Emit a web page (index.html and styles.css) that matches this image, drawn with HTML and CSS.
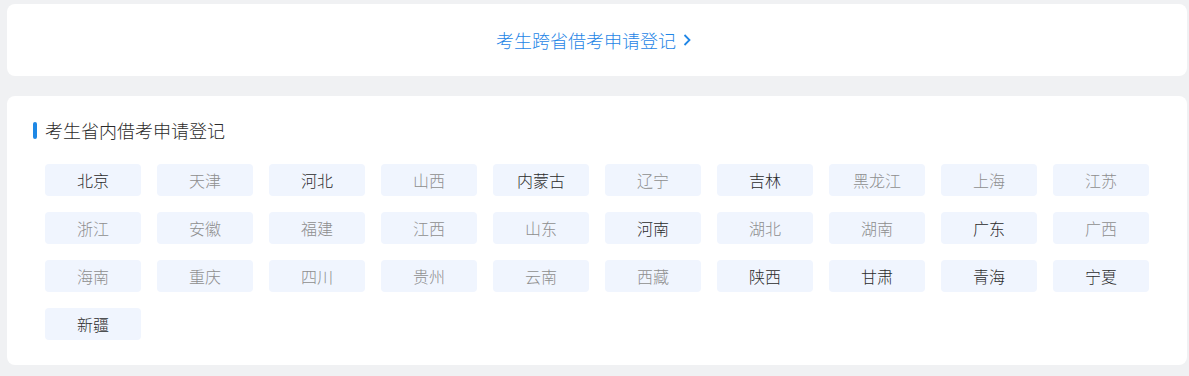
FILE: index.html
```html
<!DOCTYPE html>
<html lang="zh">
<head>
<meta charset="utf-8">
<link rel="stylesheet" href="styles.css">
</head>
<body>
<div class="page">
  <div class="card link-card">
    <a class="cross-link" href="#">考生跨省借考申请登记<svg class="chev" width="9" height="12" viewBox="0 0 9 12"><polyline points="1.5,1 6.5,6 1.5,11" fill="none" stroke="currentColor" stroke-width="1.8"/></svg></a>
  </div>
  <div class="card list-card">
    <div class="title"><span class="bar"></span>考生省内借考申请登记</div>
    <div class="grid">
      <span class="prov on">北京</span>
      <span class="prov">天津</span>
      <span class="prov on">河北</span>
      <span class="prov">山西</span>
      <span class="prov on">内蒙古</span>
      <span class="prov">辽宁</span>
      <span class="prov on">吉林</span>
      <span class="prov">黑龙江</span>
      <span class="prov">上海</span>
      <span class="prov">江苏</span>
      <span class="prov">浙江</span>
      <span class="prov">安徽</span>
      <span class="prov">福建</span>
      <span class="prov">江西</span>
      <span class="prov">山东</span>
      <span class="prov on">河南</span>
      <span class="prov">湖北</span>
      <span class="prov">湖南</span>
      <span class="prov on">广东</span>
      <span class="prov">广西</span>
      <span class="prov">海南</span>
      <span class="prov">重庆</span>
      <span class="prov">四川</span>
      <span class="prov">贵州</span>
      <span class="prov">云南</span>
      <span class="prov">西藏</span>
      <span class="prov on">陕西</span>
      <span class="prov on">甘肃</span>
      <span class="prov on">青海</span>
      <span class="prov on">宁夏</span>
      <span class="prov on">新疆</span>
    </div>
  </div>
</div>
</body>
</html>
```
FILE: styles.css
```css
html, body {
  margin: 0;
  padding: 0;
  background: #f0f1f3;
}
body {
  font-family: "Noto Sans CJK SC", "Noto Sans", sans-serif;
  font-weight: 300;
}
.page {
  padding: 4px 2px 10px 7px;
  display: flex;
  flex-direction: column;
  gap: 20px;
}
.card {
  background: #fff;
  border-radius: 8px;
}
.link-card {
  height: 72px;
  display: flex;
  align-items: center;
  justify-content: center;
}
.cross-link {
  color: #1f86e6;
  text-decoration: none;
  font-size: 18px;
  display: flex;
  align-items: center;
  gap: 7px;
  margin-right: 6px;
}
.chev {
  display: block;
}
.list-card {
  padding: 22px 0 25px 26px;
}
.title {
  display: flex;
  align-items: center;
  font-size: 18px;
  color: #2b2b2b;
  height: 24px;
}
.bar {
  width: 4px;
  height: 17px;
  background: #1e88e5;
  border-radius: 2px;
  margin-right: 8px;
}
.grid {
  margin: 22px 0 0 12px;
  display: grid;
  grid-template-columns: repeat(10, 96px);
  gap: 16px;
}
.prov {
  height: 32px;
  background: #f0f5fe;
  border-radius: 4px;
  display: flex;
  align-items: center;
  justify-content: center;
  font-size: 16px;
  color: #8e8e8e;
}
.prov.on {
  color: #2b2b2b;
}
```
